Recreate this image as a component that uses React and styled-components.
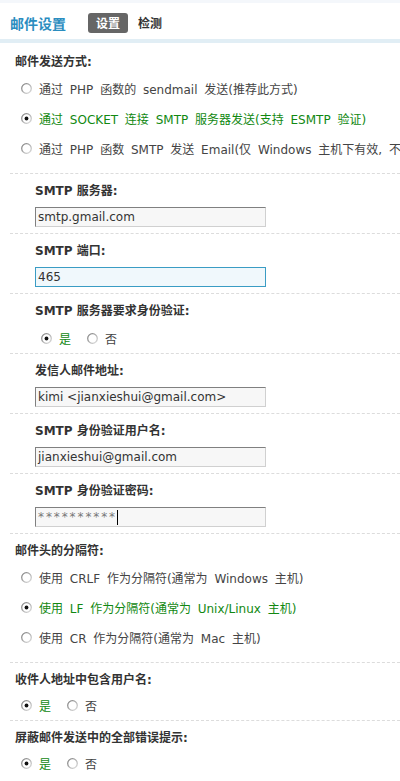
import React from "react";
import styled, { createGlobalStyle } from "styled-components";

const Global = createGlobalStyle`
  html, body { margin: 0; padding: 0; background: #fff; overflow: hidden; }
  body { font-family: "DejaVu Sans", "Noto Sans CJK SC", sans-serif; font-size: 12px; color: #444; }
`;

const Page = styled.div`
  width: 400px;
  overflow: hidden;
  white-space: nowrap;
`;

const Header = styled.div`
  display: flex;
  align-items: center;
  height: 33px;
  padding: 3px 0 0 10px;
  border-top: 3px solid #f4f7fb;
  border-bottom: 4px solid #e1eef5;
`;

const Title = styled.h1`
  margin: 0 22px 0 0;
  font-size: 14px;
  font-weight: bold;
  color: #2b8dbf;
  font-family: "Noto Sans CJK SC", sans-serif;
`;

const Tab = styled.span`
  display: inline-flex;
  align-items: center;
  height: 20px;
  padding: 0 ${(p) => (p.$active ? "8px" : "2px")};
  margin-right: 8px;
  border-radius: 3px;
  font-weight: bold;
  font-size: 12px;
  color: ${(p) => (p.$active ? "#fff" : "#333")};
  background: ${(p) => (p.$active ? "#666" : "transparent")};
`;

const Form = styled.div`
  margin-left: 10px;
`;

const Section = styled.div`
  padding: ${(p) => (p.$first ? 8 : 6)}px 0 10px 5px;
  border-top: ${(p) => (p.$first ? "none" : "1px dashed #dcdcdc")};
`;

const SectionTitle = styled.div`
  height: 22px;
  line-height: 22px;
  font-weight: bold;
  color: #333;
`;

const OptionRow = styled.label`
  display: flex;
  align-items: center;
  height: 30px;
  padding-left: 6px;
  gap: 7px;
  word-spacing: 3px;
  color: ${(p) => (p.$checked ? "#118811" : "#444")};
`;

const Field = styled.div`
  padding: 8px 0 ${(p) => (p.$tight ? 5 : 6)}px ${(p) => (p.$indent ? 25 : 5)}px;
  border-top: 1px dashed #dcdcdc;
`;

const Label = styled.div`
  height: 18px;
  line-height: 18px;
  font-weight: bold;
  color: #333;
`;

const Input = styled.div`
  box-sizing: border-box;
  width: 231px;
  height: 20px;
  margin-top: 7px;
  padding: 0 2px;
  line-height: 18px;
  font-size: 12px;
  color: #333;
  background: ${(p) => (p.$focus ? "#f0f8fc" : "#f7f7f7")};
  border: 1px solid;
  border-color: ${(p) =>
    p.$focus ? "#3a9cc4" : "#808080 #d0d0d0 #d0d0d0 #808080"};
  display: flex;
  align-items: center;
`;

const Caret = styled.span`
  display: inline-block;
  width: 1px;
  height: 15px;
  background: #000;
`;

const Stars = styled.span`
  color: #777;
  letter-spacing: 1.9px;
`;

const ChoiceRow = styled.div`
  display: flex;
  align-items: center;
  height: 20px;
  margin-top: ${(p) => p.$mt || 8}px;
  padding-left: 6px;
`;

const Choice = styled.label`
  display: inline-flex;
  align-items: center;
  gap: 7px;
  margin-right: 16px;
  color: ${(p) => (p.$checked ? "#118811" : "#444")};
`;

const RadioSvg = styled.svg`
  flex: none;
  width: 11px;
  height: 11px;
`;

let gid = 0;
function Radio({ checked }) {
  const id = `rg${gid++}`;
  return (
    <RadioSvg viewBox="0 0 11 11">
      <defs>
        <linearGradient id={id} x1="0" y1="0" x2="1" y2="1">
          <stop offset="0" stopColor="#7a7a7a" />
          <stop offset="1" stopColor="#e0e0e0" />
        </linearGradient>
      </defs>
      <circle cx="5.5" cy="5.5" r="4.8" fill="#fff" stroke={`url(#${id})`} strokeWidth="1.3" />
      {checked && <circle cx="5.5" cy="5.5" r="1.9" fill="#111" />}
    </RadioSvg>
  );
}

function YesNo({ mt }) {
  return (
    <ChoiceRow $mt={mt}>
      <Choice $checked>
        <Radio checked />是
      </Choice>
      <Choice>
        <Radio />否
      </Choice>
    </ChoiceRow>
  );
}

export default function App() {
  return (
    <Page>
      <Global />
      <Header>
        <Title>邮件设置</Title>
        <Tab $active>设置</Tab>
        <Tab>检测</Tab>
      </Header>
      <Form>
        <Section $first>
          <SectionTitle>邮件发送方式:</SectionTitle>
          <OptionRow>
            <Radio />通过 PHP 函数的 sendmail 发送(推荐此方式)
          </OptionRow>
          <OptionRow $checked>
            <Radio checked />通过 SOCKET 连接 SMTP 服务器发送(支持 ESMTP 验证)
          </OptionRow>
          <OptionRow>
            <Radio />通过 PHP 函数 SMTP 发送 Email(仅 Windows 主机下有效, 不支持 ESMTP 验证)
          </OptionRow>
        </Section>
        <Field $indent>
          <Label>SMTP 服务器:</Label>
          <Input>smtp.gmail.com</Input>
        </Field>
        <Field $indent>
          <Label>SMTP 端口:</Label>
          <Input $focus>465</Input>
        </Field>
        <Field $indent $tight>
          <Label>SMTP 服务器要求身份验证:</Label>
          <YesNo />
        </Field>
        <Field $indent>
          <Label>发信人邮件地址:</Label>
          <Input>kimi &lt;jianxieshui@gmail.com&gt;</Input>
        </Field>
        <Field $indent>
          <Label>SMTP 身份验证用户名:</Label>
          <Input>jianxieshui@gmail.com</Input>
        </Field>
        <Field $indent>
          <Label>SMTP 身份验证密码:</Label>
          <Input>
            <Stars>**********</Stars>
            <Caret />
          </Input>
        </Field>
        <Section>
          <SectionTitle>邮件头的分隔符:</SectionTitle>
          <OptionRow>
            <Radio />使用 CRLF 作为分隔符(通常为 Windows 主机)
          </OptionRow>
          <OptionRow $checked>
            <Radio checked />使用 LF 作为分隔符(通常为 Unix/Linux 主机)
          </OptionRow>
          <OptionRow>
            <Radio />使用 CR 作为分隔符(通常为 Mac 主机)
          </OptionRow>
        </Section>
        <Field $tight>
          <Label>收件人地址中包含用户名:</Label>
          <YesNo mt={6} />
        </Field>
        <Field $tight>
          <Label>屏蔽邮件发送中的全部错误提示:</Label>
          <YesNo mt={6} />
        </Field>
      </Form>
    </Page>
  );
}
